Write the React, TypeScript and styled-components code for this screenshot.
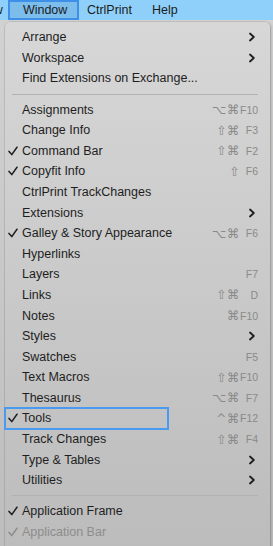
import React from "react";
import styled, { createGlobalStyle } from "styled-components";

type Item =
  | { sep: true }
  | {
      sep?: false;
      label: string;
      checked?: boolean;
      disabled?: boolean;
      submenu?: boolean;
      mods?: string;
      keyName?: string;
      boxed?: boolean;
    };

const items: Item[] = [
  { label: "Arrange", submenu: true },
  { label: "Workspace", submenu: true },
  { label: "Find Extensions on Exchange..." },
  { sep: true },
  { label: "Assignments", mods: "⌥⌘", keyName: "F10" },
  { label: "Change Info", mods: "⇧⌘", keyName: "F3" },
  { label: "Command Bar", checked: true, mods: "⇧⌘", keyName: "F2" },
  { label: "Copyfit Info", checked: true, mods: "⇧", keyName: "F6" },
  { label: "CtrlPrint TrackChanges" },
  { label: "Extensions", submenu: true },
  { label: "Galley & Story Appearance", checked: true, mods: "⌥⌘", keyName: "F6" },
  { label: "Hyperlinks" },
  { label: "Layers", keyName: "F7" },
  { label: "Links", mods: "⇧⌘", keyName: "D" },
  { label: "Notes", mods: "⌘", keyName: "F10" },
  { label: "Styles", submenu: true },
  { label: "Swatches", keyName: "F5" },
  { label: "Text Macros", mods: "⇧⌘", keyName: "F10" },
  { label: "Thesaurus", mods: "⌥⌘", keyName: "F7" },
  { label: "Tools", checked: true, mods: "^⌘", keyName: "F12", boxed: true },
  { label: "Track Changes", mods: "⇧⌘", keyName: "F4" },
  { label: "Type & Tables", submenu: true },
  { label: "Utilities", submenu: true },
  { sep: true },
  { label: "Application Frame", checked: true },
  { label: "Application Bar", checked: true, disabled: true },
];

function Check() {
  return (
    <svg width="10" height="10" viewBox="0 0 10 10">
      <path d="M1 5.4 L3.8 8.6 L9 1.2" fill="none" stroke="currentColor" strokeWidth="1.5" strokeLinecap="round" strokeLinejoin="round" />
    </svg>
  );
}

function Chevron() {
  return (
    <svg width="6" height="10" viewBox="0 0 6 10">
      <path d="M1 1.5 L4.8 5 L1 8.5" fill="none" stroke="#1e1e1e" strokeWidth="1.8" strokeLinecap="round" strokeLinejoin="round" />
    </svg>
  );
}

export default function App() {
  return (
    <>
      <GlobalStyle />
      <Page>
        <MenuBar>
          <BarItem $lead>View</BarItem>
          <ActiveItem>Window</ActiveItem>
          <BarItem>CtrlPrint</BarItem>
          <BarItem>Help</BarItem>
        </MenuBar>
        <Menu>
          {items.map((it, i) =>
            it.sep ? (
              <Separator key={i} />
            ) : (
              <Row key={i} $disabled={it.disabled}>
                <CheckCell>{it.checked && <Check />}</CheckCell>
                <Label>{it.label}</Label>
                {it.submenu ? (
                  <ChevronCell>
                    <Chevron />
                  </ChevronCell>
                ) : it.keyName ? (
                  <Shortcut>
                    <Mods>{it.mods}</Mods>
                    <KeyName>{it.keyName}</KeyName>
                  </Shortcut>
                ) : null}
                {it.boxed && <Highlight />}
              </Row>
            )
          )}
        </Menu>
      </Page>
    </>
  );
}

const GlobalStyle = createGlobalStyle`
  html, body {
    margin: 0;
    padding: 0;
    background: #c9c9c9;
  }
  body {
    font-family: "Liberation Sans", Arial, sans-serif;
  }
`;

const Page = styled.div`
  width: 273px;
  height: 546px;
  overflow: hidden;
  background: linear-gradient(#d3d3d3, #bdbdbd);
`;

const MenuBar = styled.div`
  height: 20px;
  background: #8fd0fb;
  display: flex;
  align-items: stretch;
  font-size: 12.5px;
  color: #1c1c1c;
`;

const BarItem = styled.div<{ $lead?: boolean }>`
  display: flex;
  align-items: center;
  white-space: nowrap;
  margin-left: ${(p) => (p.$lead ? "-24px" : "0")};
  margin-right: ${(p) => (p.$lead ? "5px" : "20px")};
`;

const ActiveItem = styled.div`
  display: flex;
  align-items: center;
  width: 71px;
  box-sizing: border-box;
  padding-left: 13px;
  margin-right: 8px;
  background: #7dbdec;
  border: 2px solid #3e8fe8;
`;

const Menu = styled.div`
  margin: 2px 3px 0 5px;
  padding: 5px 0;
  border-radius: 5px 5px 0 0;
  background: linear-gradient(#d7d7d7, #bcbcbc);
  box-shadow: 0 0 0 0.5px rgba(0, 0, 0, 0.15), 1px 1px 3px rgba(0, 0, 0, 0.2);
`;

const Row = styled.div<{ $disabled?: boolean }>`
  position: relative;
  height: 20.6px;
  display: flex;
  align-items: center;
  padding-right: 12px;
  font-size: 12.5px;
  color: ${(p) => (p.$disabled ? "#8d8d8d" : "#1e1e1e")};
`;

const CheckCell = styled.div`
  width: 17px;
  padding-left: 3px;
  box-sizing: border-box;
  display: flex;
  align-items: center;
`;

const Label = styled.div`
  flex: 1;
  white-space: nowrap;
`;

const ChevronCell = styled.div`
  display: flex;
  align-items: center;
  margin-right: 3px;
`;

const Shortcut = styled.div`
  display: flex;
  align-items: center;
  color: #8a8a8a;
`;

const Mods = styled.span`
  font-family: "DejaVu Sans", sans-serif;
  font-size: 12.5px;
  letter-spacing: 0.5px;
  text-align: right;
`;

const KeyName = styled.span`
  width: 18px;
  text-align: right;
  font-size: 10.5px;
`;

const Separator = styled.div`
  height: 10.5px;
  display: flex;
  align-items: center;
  padding: 0 12px 0 7px;
  &::after {
    content: "";
    flex: 1;
    height: 1px;
    background: #b2b2b2;
  }
`;

const Highlight = styled.div`
  position: absolute;
  left: -1px;
  top: -1px;
  width: 165px;
  height: 23px;
  box-sizing: border-box;
  border: 2px solid #4a9af2;
`;
